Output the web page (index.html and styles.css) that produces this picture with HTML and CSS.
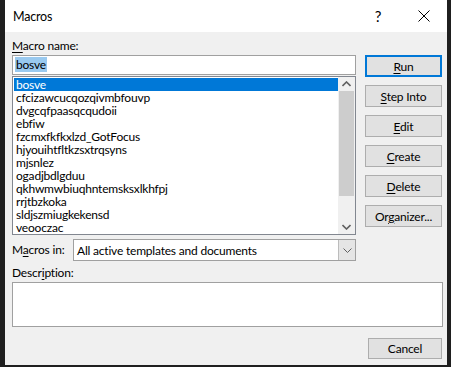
FILE: index.html
```html
<!DOCTYPE html>
<html lang="en">
<head>
    <meta charset="UTF-8">
    <title>Macros</title>
    <link rel="stylesheet" href="styles.css">
</head>
<body>

    <div class="dialog">
        <div class="titlebar">
            <span class="title">Macros</span>
            <span class="help">?</span>
            <span class="close">
                <svg width="12" height="12" viewBox="0 0 12 12"><path d="M0.5 0.5 L11.5 11.5 M11.5 0.5 L0.5 11.5" stroke="#000" stroke-width="1" fill="none"/></svg>
            </span>
        </div>

        <div class="content">
            <div class="top">
                <div class="left">
                    <div class="label"><u>M</u>acro name:</div>
                    <div class="name-input"><span class="sel">bosve</span></div>
                    <div class="list">
                        <div class="items">
                            <div class="item active">bosve</div>
                            <div class="item">cfcizawcucqozqivmbfouvp</div>
                            <div class="item">dvgcqfpaasqcqudoii</div>
                            <div class="item">ebfiw</div>
                            <div class="item">fzcmxfkfkxlzd_GotFocus</div>
                            <div class="item">hjyouihtfltkzsxtrqsyns</div>
                            <div class="item">mjsnlez</div>
                            <div class="item">ogadjbdlgduu</div>
                            <div class="item">qkhwmwbiuqhntemsksxlkhfpj</div>
                            <div class="item">rrjtbzkoka</div>
                            <div class="item">sldjszmiugkekensd</div>
                            <div class="item">veooczac</div>
                        </div>
                        <div class="scrollbar">
                            <div class="arrow">
                                <svg width="9" height="6" viewBox="0 0 9 6"><path d="M0.5 5 L4.5 1 L8.5 5" stroke="#606060" stroke-width="1.6" fill="none"/></svg>
                            </div>
                            <div class="track"><div class="thumb"></div></div>
                            <div class="arrow">
                                <svg width="9" height="6" viewBox="0 0 9 6"><path d="M0.5 1 L4.5 5 L8.5 1" stroke="#606060" stroke-width="1.6" fill="none"/></svg>
                            </div>
                        </div>
                    </div>
                    <div class="macros-in">
                        <span class="label">M<u>a</u>cros in:</span>
                        <div class="combo">
                            <span class="combo-text">All active templates and documents</span>
                            <span class="combo-btn">
                                <svg width="9" height="5" viewBox="0 0 9 5"><path d="M0.5 0.5 L4.5 4.5 L8.5 0.5" stroke="#606060" stroke-width="1" fill="none"/></svg>
                            </span>
                        </div>
                    </div>
                </div>

                <div class="buttons">
                    <button class="btn default"><u>R</u>un</button>
                    <button class="btn"><u>S</u>tep Into</button>
                    <button class="btn"><u>E</u>dit</button>
                    <button class="btn"><u>C</u>reate</button>
                    <button class="btn"><u>D</u>elete</button>
                    <button class="btn">Or<u>g</u>anizer...</button>
                </div>
            </div>

            <div class="label desc-label">Descr<u>i</u>ption:</div>
            <div class="desc-box"></div>

            <div class="footer">
                <button class="btn cancel">Cancel</button>
            </div>
        </div>
    </div>

</body>
</html>
```

FILE: styles.css
```css
* { margin: 0; padding: 0; box-sizing: border-box; }
body {
    background: #1f1f1f; font-family: "Lato", sans-serif;
    font-size: 12px; letter-spacing: -0.2px; color: #000;
}
u { text-decoration: underline; text-underline-offset: 2px; }

.dialog { width: 442px; height: 365px; margin-left: 5px; background: #f0f0f0; display: flex; flex-direction: column; }

.titlebar { height: 32px; background: #fff; display: flex; align-items: center; }
.title { font-size: 12.5px; margin-left: 8px; flex: 1; }
.help { width: 46px; text-align: center; font-size: 15px; margin-right: 0; }
.close { width: 46px; display: flex; justify-content: center; align-items: center; }

.content { padding: 7px 5px 0 7px; display: flex; flex-direction: column; }
.top { display: flex; gap: 9px; }
.left { width: 344px; display: flex; flex-direction: column; }
.label { height: 16px; line-height: 14px; white-space: nowrap; }

.name-input {
    height: 20px; background: #fff; border: 1px solid #a0a0a0;
    padding: 1px 2px; line-height: 16px;
}
.sel { background: #99c9ef; padding: 0 1px; }

.list {
    margin-top: 1px; height: 159px; background: #fff; border: 1px solid #828790;
    display: flex;
}
.items { flex: 1; padding: 1px 0 0 1px; }
.item { height: 13px; line-height: 13px; padding-left: 2px; white-space: nowrap; }
.item.active { background: #0078d7; color: #fff; }

.scrollbar { width: 17px; background: #f0f0f0; display: flex; flex-direction: column; }
.arrow { height: 17px; display: flex; justify-content: center; align-items: center; }
.track { flex: 1; padding: 0 0 25px; }
.thumb { height: 105px; margin: 0 1px; background: #cdcdcd; }

.macros-in { display: flex; align-items: center; margin-top: 4px; height: 22px; }
.macros-in .label { width: 61px; height: auto; }
.combo {
    flex: 1; height: 22px; background: #fff; border: 1px solid #a0a0a0;
    display: flex; align-items: center;
}
.combo-text { flex: 1; padding-left: 3px; }
.combo-btn {
    width: 17px; height: 20px; background: #e5e5e5; border-left: 1px solid #bcbcbc;
    display: flex; justify-content: center; align-items: center;
}

.buttons { width: 77px; margin-top: 16px; display: flex; flex-direction: column; gap: 8px; }
.btn {
    height: 22px; background: #e1e1e1; border: 1px solid #adadad;
    font-family: inherit; font-size: 12px; letter-spacing: inherit; color: #000;
}
.btn.default { border: 2px solid #0078d7; }

.desc-label { margin-top: 4px; line-height: 16px; height: 17px; }
.desc-box { height: 45px; width: 431px; background: #fff; border: 1px solid #a0a0a0; }

.footer { display: flex; justify-content: flex-end; padding-right: 0; margin-top: 11px; }
.cancel { width: 74px; height: 21px; }
```
